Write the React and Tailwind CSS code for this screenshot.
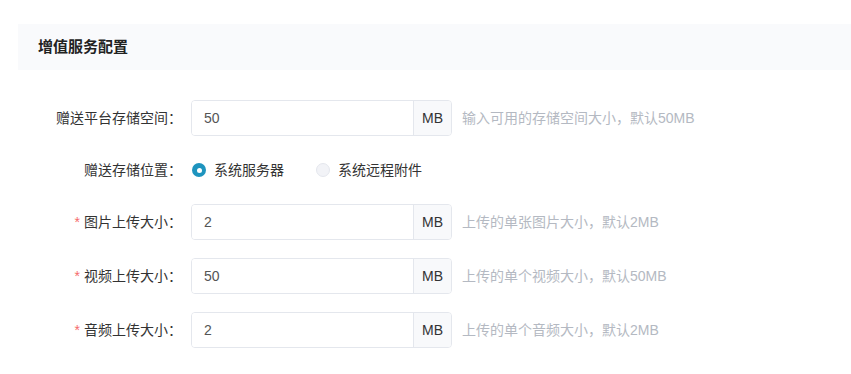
import React, { useState } from "react";

const font = { fontFamily: '"Liberation Sans", Arial, "Noto Sans CJK SC", sans-serif' };

function SizeRow({ label, value, help, required }) {
  return (
    <div className="flex items-center h-[36px] mb-[18px]">
      <label className="w-[173px] pr-[9px] text-right text-[14px] text-[#333]">
        {required && <span className="text-[#f56c6c] mr-[4px]">*</span>}
        {label}：
      </label>
      <div className="flex w-[261px] h-[36px] border border-[#e4e7ed] rounded-[4px] overflow-hidden">
        <input
          className="flex-1 min-w-0 px-[12px] text-[14px] text-[#555] outline-none bg-white"
          defaultValue={value}
        />
        <div className="w-[38px] flex items-center justify-center border-l border-[#e4e7ed] bg-[#f8f9fb] text-[14px] text-[#333]">
          MB
        </div>
      </div>
      <span className="ml-[10px] text-[14px] text-[#b4b9c2]">{help}</span>
    </div>
  );
}

function Radio({ checked, label, onClick }) {
  return (
    <span className="flex items-center cursor-pointer" onClick={onClick}>
      <span
        className={
          checked
            ? "w-[14px] h-[14px] rounded-full bg-[#1e94be] flex items-center justify-center"
            : "w-[14px] h-[14px] rounded-full bg-[#f2f3f7] border border-[#e4e7ed]"
        }
      >
        {checked && <span className="w-[5px] h-[5px] rounded-full bg-white" />}
      </span>
      <span className="ml-[8px] text-[14px] text-[#333]">{label}</span>
    </span>
  );
}

export default function App() {
  const [place, setPlace] = useState(0);

  return (
    <div className="w-[851px] h-[374px] bg-white pt-[24px]" style={font}>
      <div className="ml-[18px] h-[46px] bg-[#f9fafc] flex items-center pl-[20px]">
        <span className="text-[15px] font-bold text-[#222]">增值服务配置</span>
      </div>

      <div className="ml-[18px] mt-[30px]">
        <SizeRow label="赠送平台存储空间" value="50" help="输入可用的存储空间大小，默认50MB" />

        <div className="flex items-center h-[32px] mb-[18px]">
          <label className="w-[173px] pr-[9px] text-right text-[14px] text-[#333]">
            赠送存储位置：
          </label>
          <div className="flex items-center gap-[32px] pl-[1px]">
            <Radio checked={place === 0} label="系统服务器" onClick={() => setPlace(0)} />
            <Radio checked={place === 1} label="系统远程附件" onClick={() => setPlace(1)} />
          </div>
        </div>

        <SizeRow required label="图片上传大小" value="2" help="上传的单张图片大小，默认2MB" />
        <SizeRow required label="视频上传大小" value="50" help="上传的单个视频大小，默认50MB" />
        <SizeRow required label="音频上传大小" value="2" help="上传的单个音频大小，默认2MB" />
      </div>
    </div>
  );
}
